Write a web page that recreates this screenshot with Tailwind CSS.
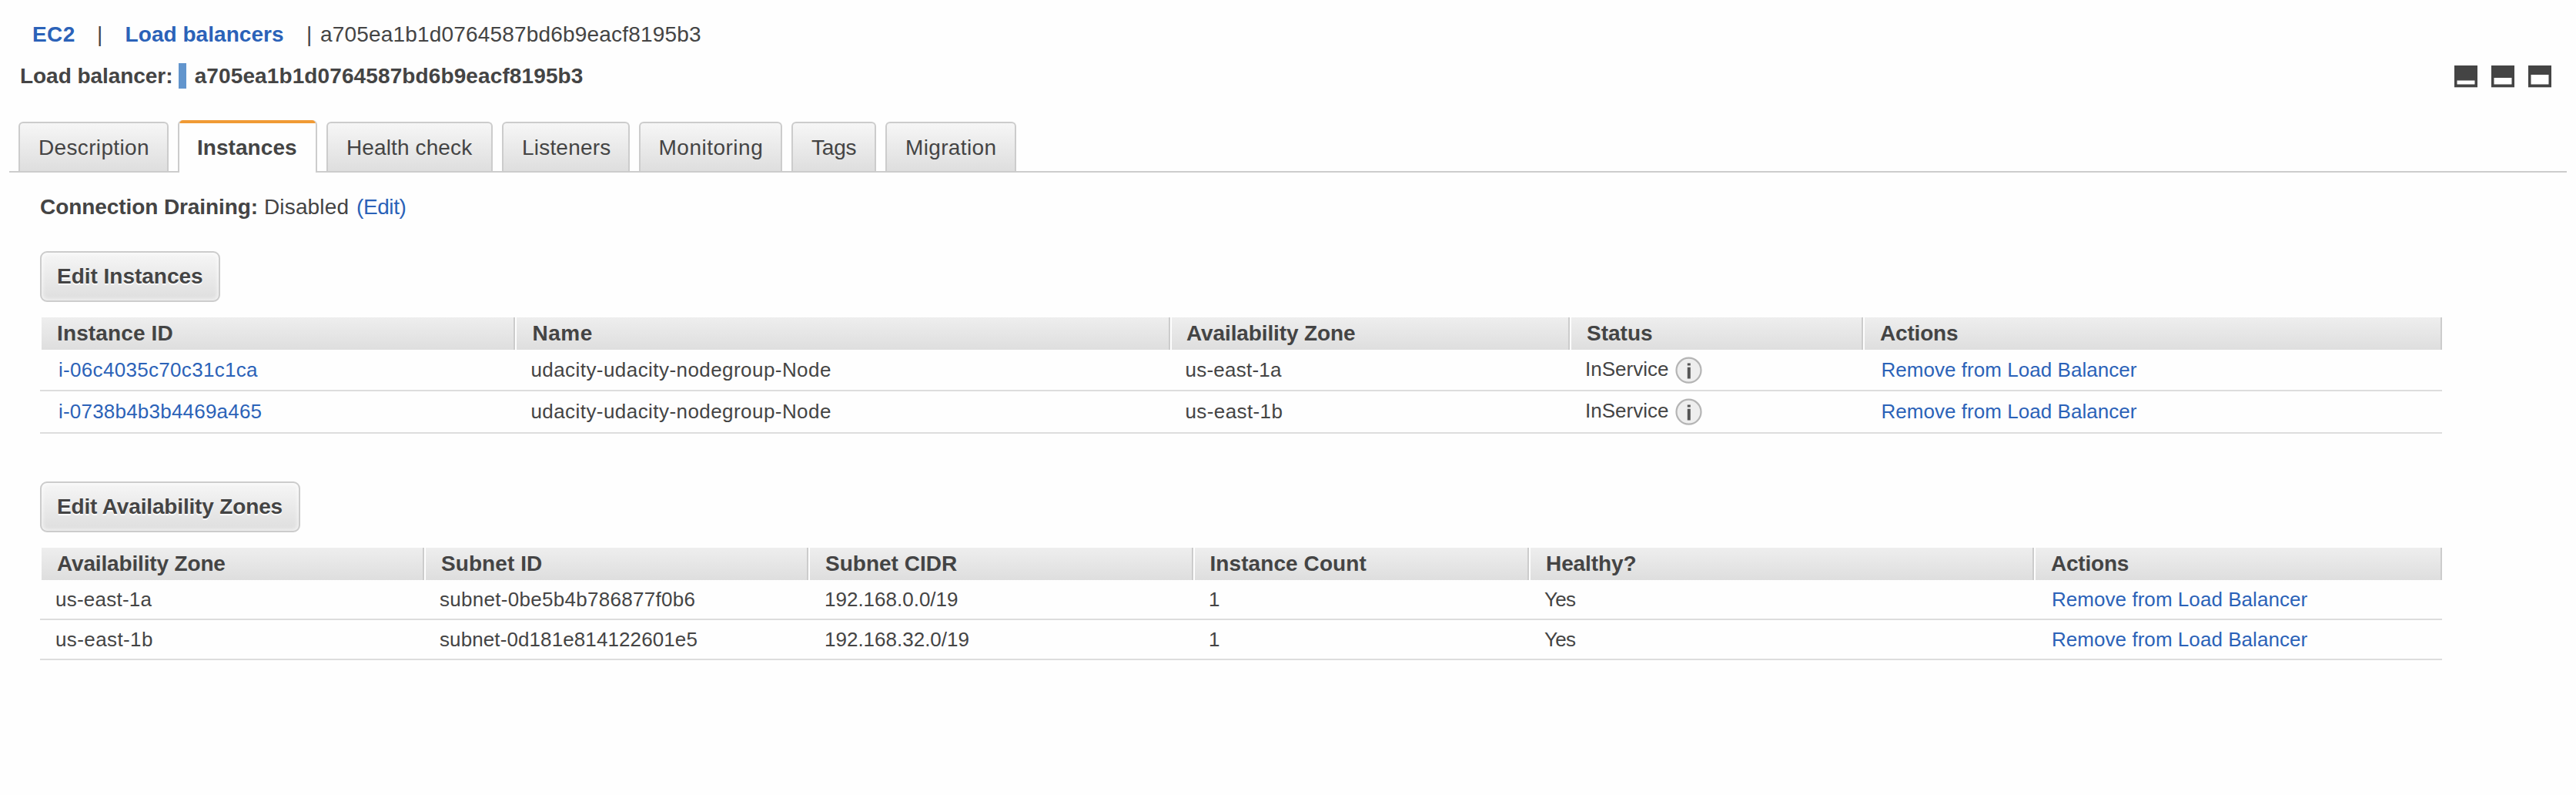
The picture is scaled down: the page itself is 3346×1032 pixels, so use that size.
<!DOCTYPE html>
<html lang="en">
<head>
<meta charset="utf-8">
<title>Load balancer instances</title>
<script src="https://cdn.jsdelivr.net/npm/@tailwindcss/browser@4"></script>
</head>
<body class="min-h-screen bg-[#fefefe] font-['Liberation_Sans',Arial,sans-serif] text-[28px] leading-8 whitespace-nowrap text-[#444]">

<!-- Breadcrumb -->
<nav class="flex h-[61px] pt-[29px]">
  <a class="w-[84px] ml-[42px] font-bold tracking-[.4px] text-[#2b62b8]">EC2</a>
  <span class="w-[36.6px]">|</span>
  <a class="w-[235.4px] font-bold tracking-[.04px] text-[#2b62b8]">Load balancers</a>
  <span class="w-[18px]">|</span>
  <span class="tracking-[.18px]">a705ea1b1d0764587bd6b9eacf8195b3</span>
</nav>

<!-- Title and panel controls -->
<header class="flex h-[95px] items-start pt-[21px] pr-8 pl-[26px] font-bold">
  <h1 class="mt-[1px] w-[206px] tracking-[-.05px]">Load balancer:</h1>
  <span class="h-[33px] w-[10px] bg-[#6295cd]"></span>
  <h2 class="mt-[1px] ml-[10.7px] tracking-[.11px]">a705ea1b1d0764587bd6b9eacf8195b3</h2>
  <div class="mt-[3px] ml-auto flex gap-[18px]">
    <svg class="h-[29px] w-[30px]" viewBox="0 0 30 29"><path fill="#c4c4c4" d="M0 28h30v1H0z"/><path fill="#444" d="M0 0h30v28H0z"/><path fill="#fff" d="M3.5 19.5h23v5h-23z"/></svg>
    <svg class="h-[29px] w-[30px]" viewBox="0 0 30 29"><path fill="#c4c4c4" d="M0 28h30v1H0z"/><path fill="#444" d="M0 0h30v28H0z"/><path fill="#fff" d="M3.5 16h23v8.5h-23z"/></svg>
    <svg class="h-[29px] w-[30px]" viewBox="0 0 30 29"><path fill="#c4c4c4" d="M0 28h30v1H0z"/><path fill="#444" d="M0 0h30v28H0z"/><path fill="#fff" d="M3.5 12h23v12.5h-23z"/></svg>
  </div>
</header>

<!-- Tabs -->
<div class="mr-3 ml-3 flex h-[68px] items-end gap-3 border-b-2 border-[#ccc] pl-3">
  <div class="h-16 w-[195px] rounded-t-[6px] border-2 border-b-0 border-[#ccc] bg-linear-to-b from-[#f6f6f6] to-[#dedede] pt-[16px] pl-[24px] tracking-[.35px]">Description</div>
  <div class="-mb-0.5 h-[68px] w-[181px] overflow-hidden rounded-t-[6px] border-x-2 border-[#ccc] bg-[#fefefe] font-bold"><div class="h-1 bg-[#f09a35]"></div><div class="pt-[16px] pl-[23px] tracking-[.05px]">Instances</div></div>
  <div class="h-16 w-[216px] rounded-t-[6px] border-2 border-b-0 border-[#ccc] bg-linear-to-b from-[#f6f6f6] to-[#dedede] pt-[16px] pl-[24px] tracking-[.12px]">Health check</div>
  <div class="h-16 w-[166px] rounded-t-[6px] border-2 border-b-0 border-[#ccc] bg-linear-to-b from-[#f6f6f6] to-[#dedede] pt-[16px] pl-[24px] tracking-[.2px]">Listeners</div>
  <div class="h-16 w-[186px] rounded-t-[6px] border-2 border-b-0 border-[#ccc] bg-linear-to-b from-[#f6f6f6] to-[#dedede] pt-[16px] pl-[23.5px] tracking-[.5px]">Monitoring</div>
  <div class="h-16 w-[110px] rounded-t-[6px] border-2 border-b-0 border-[#ccc] bg-linear-to-b from-[#f6f6f6] to-[#dedede] pt-[16px] pl-[24px] tracking-[-.21px]">Tags</div>
  <div class="h-16 w-[170px] rounded-t-[6px] border-2 border-b-0 border-[#ccc] bg-linear-to-b from-[#f6f6f6] to-[#dedede] pt-[16px] pl-[24px] tracking-[.35px]">Migration</div>
</div>

<main class="w-[3120px] ml-[52px]">
  <p class="flex h-[102px] pt-[29px]">
    <b class="w-[291px] tracking-[-.08px]">Connection Draining:</b>
    <span class="w-[120px] tracking-[.15px]">Disabled</span>
    <a class="tracking-[-.4px] text-[#2b62b8]">(Edit)</a>
  </p>

  <button class="block h-[66px] w-[234px] rounded-[9px] border-2 border-[#ccc] bg-linear-to-b from-[#f6f6f6] to-[#dedede] pl-5 text-left font-bold tracking-[-.02px] shadow-[inset_0_0_6px_#fff] text-shadow-[0_2px_0_#fff]">Edit Instances</button>

  <!-- Registered instances -->
  <div class="mt-5 grid grid-cols-[617px_851px_519px_381px_752px]">
    <div class="col-span-5 grid h-[42px] grid-cols-subgrid font-bold leading-[38px]">
      <div class="border-r-2 border-l-2 border-r-[#ccc] border-l-[#fefefe] bg-linear-to-b from-[#eee] to-[#dedede] pt-[2px] pl-5 tracking-[.13px]">Instance ID</div>
      <div class="border-r-2 border-l-2 border-r-[#ccc] border-l-[#fefefe] bg-linear-to-b from-[#eee] to-[#dedede] pt-[2px] pl-[20.5px] tracking-[.54px]">Name</div>
      <div class="border-r-2 border-l-2 border-r-[#ccc] border-l-[#fefefe] bg-linear-to-b from-[#eee] to-[#dedede] pt-[2px] pl-[19px] tracking-[-.12px]">Availability Zone</div>
      <div class="border-r-2 border-l-2 border-r-[#ccc] border-l-[#fefefe] bg-linear-to-b from-[#eee] to-[#dedede] pt-[2px] pl-5">Status</div>
      <div class="border-r-2 border-l-2 border-r-[#ccc] border-l-[#fefefe] bg-linear-to-b from-[#eee] to-[#dedede] pt-[2px] pl-5 tracking-[-.18px]">Actions</div>
    </div>
    <div class="col-span-5 grid h-[54px] grid-cols-subgrid border-b-2 border-[#ddd] pt-[10px] text-[26px]">
      <a class="pl-[24px] tracking-[.31px] text-[#2b62b8]">i-06c4035c70c31c1ca</a>
      <span class="pl-[20.4px] tracking-[.44px]">udacity-udacity-nodegroup-Node</span>
      <span class="pl-[19.5px] tracking-[.24px]">us-east-1a</span>
      <span class="flex pl-[20px]"><span class="-mt-px w-[116.5px]">InService</span><svg class="-mt-[1px] size-[36px]" viewBox="0 0 36 36"><circle cx="17.5" cy="17.7" r="16" fill="#eee" stroke="#b4b4b4" stroke-width="2.2"/><path d="M15.8 8.5h4v3h-4zM15.8 13.7h4V28.5h-4z" fill="#555"/></svg></span>
      <a class="pl-[23.4px] tracking-[.05px] text-[#2b62b8]">Remove from Load Balancer</a>
    </div>
    <div class="col-span-5 grid h-[55px] grid-cols-subgrid border-b-2 border-[#ddd] pt-[10px] text-[26px]">
      <a class="pl-[24px] tracking-[.21px] text-[#2b62b8]">i-0738b4b3b4469a465</a>
      <span class="pl-[20.4px] tracking-[.44px]">udacity-udacity-nodegroup-Node</span>
      <span class="pl-[19.5px] tracking-[.4px]">us-east-1b</span>
      <span class="flex pl-[20px]"><span class="-mt-px w-[116.5px]">InService</span><svg class="-mt-[1px] size-[36px]" viewBox="0 0 36 36"><circle cx="17.5" cy="17.7" r="16" fill="#eee" stroke="#b4b4b4" stroke-width="2.2"/><path d="M15.8 8.5h4v3h-4zM15.8 13.7h4V28.5h-4z" fill="#555"/></svg></span>
      <a class="pl-[23.4px] tracking-[.05px] text-[#2b62b8]">Remove from Load Balancer</a>
    </div>
  </div>

  <button class="mt-[62px] block h-[66px] w-[338px] rounded-[9px] border-2 border-[#ccc] bg-linear-to-b from-[#f6f6f6] to-[#dedede] pl-5 text-left font-bold tracking-[-.16px] shadow-[inset_0_0_6px_#fff] text-shadow-[0_2px_0_#fff]">Edit Availability Zones</button>

  <!-- Availability zones -->
  <div class="mt-5 grid grid-cols-[499px_499px_500px_436px_656px_530px]">
    <div class="col-span-6 grid h-[42px] grid-cols-subgrid font-bold leading-[38px]">
      <div class="border-r-2 border-l-2 border-r-[#ccc] border-l-[#fefefe] bg-linear-to-b from-[#eee] to-[#dedede] pt-[2px] pl-5 tracking-[-.16px]">Availability Zone</div>
      <div class="border-r-2 border-l-2 border-r-[#ccc] border-l-[#fefefe] bg-linear-to-b from-[#eee] to-[#dedede] pt-[2px] pl-5 tracking-[.07px]">Subnet ID</div>
      <div class="border-r-2 border-l-2 border-r-[#ccc] border-l-[#fefefe] bg-linear-to-b from-[#eee] to-[#dedede] pt-[2px] pl-5">Subnet CIDR</div>
      <div class="border-r-2 border-l-2 border-r-[#ccc] border-l-[#fefefe] bg-linear-to-b from-[#eee] to-[#dedede] pt-[2px] pl-[19.5px] tracking-[.08px]">Instance Count</div>
      <div class="border-r-2 border-l-2 border-r-[#ccc] border-l-[#fefefe] bg-linear-to-b from-[#eee] to-[#dedede] pt-[2px] pl-5 tracking-[-.09px]">Healthy?</div>
      <div class="border-r-2 border-l-2 border-r-[#ccc] border-l-[#fefefe] bg-linear-to-b from-[#eee] to-[#dedede] pt-[2px] pl-5 tracking-[-.22px]">Actions</div>
    </div>
    <div class="col-span-6 grid h-[52px] grid-cols-subgrid border-b-2 border-[#ddd] pt-[9px] text-[26px]">
      <span class="pl-5 tracking-[.24px]">us-east-1a</span>
      <span class="pl-5 tracking-[.29px]">subnet-0be5b4b786877f0b6</span>
      <span class="pl-[21px]">192.168.0.0/19</span>
      <span class="pl-5">1</span>
      <span class="pl-5 tracking-[-.7px]">Yes</span>
      <a class="pl-[23px] tracking-[.05px] text-[#2b62b8]">Remove from Load Balancer</a>
    </div>
    <div class="col-span-6 grid h-[52px] grid-cols-subgrid border-b-2 border-[#ddd] pt-[9px] text-[26px]">
      <span class="pl-5 tracking-[.4px]">us-east-1b</span>
      <span class="pl-5 tracking-[.1px]">subnet-0d181e814122601e5</span>
      <span class="pl-[21px]">192.168.32.0/19</span>
      <span class="pl-5">1</span>
      <span class="pl-5 tracking-[-.7px]">Yes</span>
      <a class="pl-[23px] tracking-[.05px] text-[#2b62b8]">Remove from Load Balancer</a>
    </div>
  </div>
</main>
</body>
</html>
